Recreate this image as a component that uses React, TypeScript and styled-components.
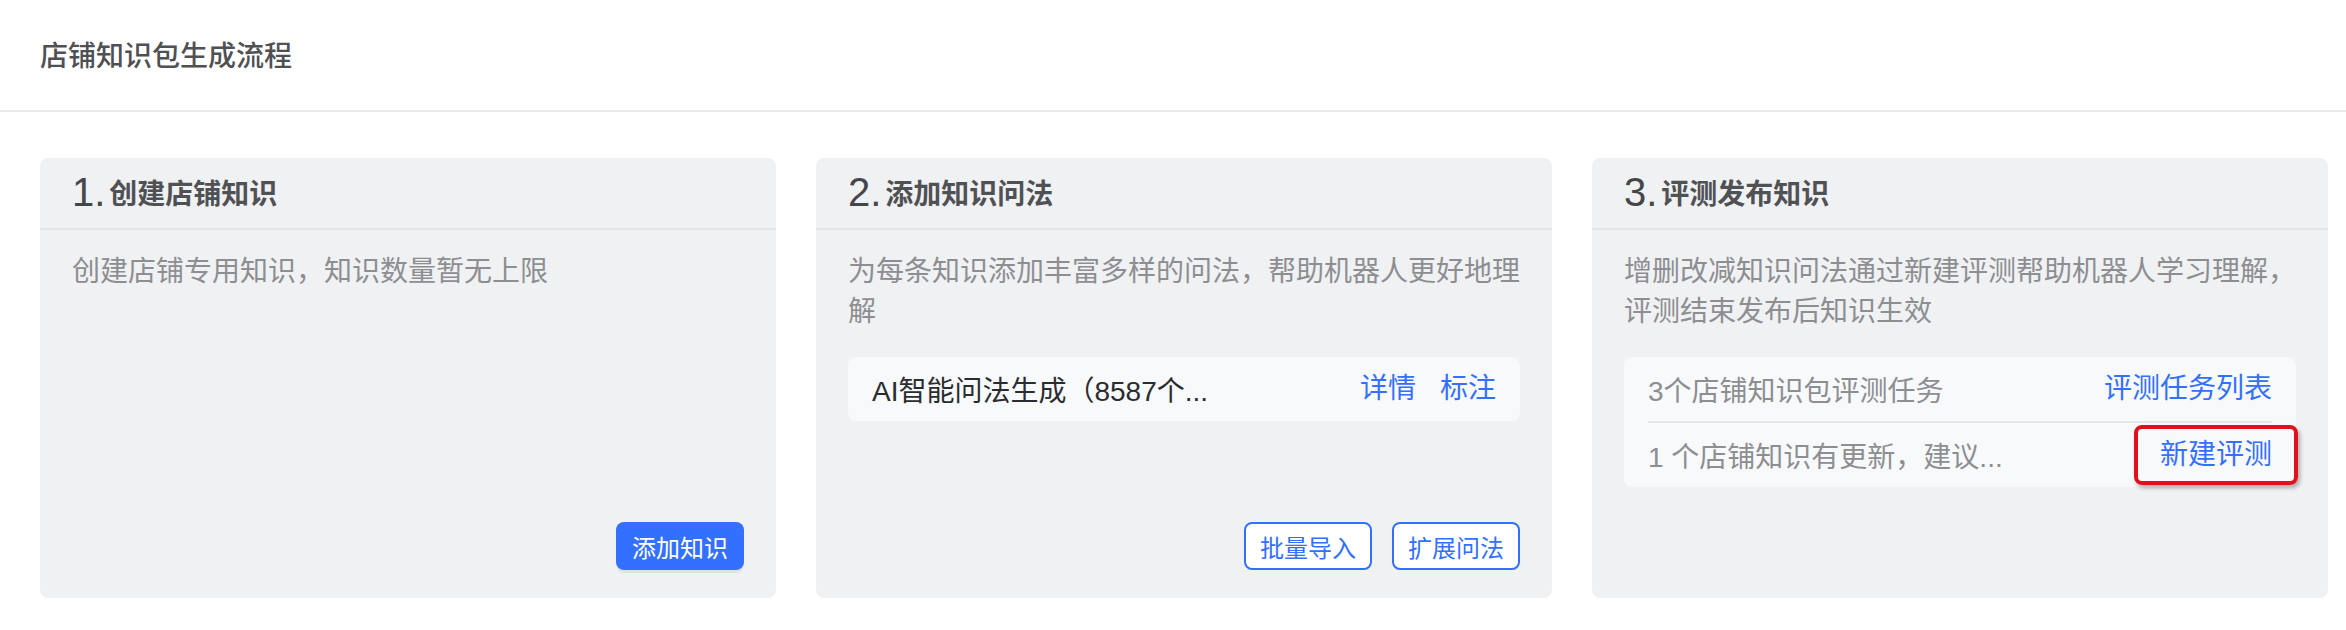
import * as React from 'react'
import styled, { createGlobalStyle, css } from 'styled-components'

const Global = createGlobalStyle`
  * {
    box-sizing: border-box;
  }
  body {
    margin: 0;
    padding: 0;
    background: #fff;
    font-family: "Helvetica Neue", Helvetica, "Liberation Sans", "Noto Sans CJK SC", sans-serif;
  }
`

const blue = '#3370ff'

const Page = styled.div`
  width: 2346px;
  min-height: 630px;
  background: #fff;
`

const Header = styled.div`
  height: 112px;
  display: flex;
  align-items: center;
  padding: 0 40px 2px;
  border-bottom: 2px solid #e8e8e9;
  font-size: 28px;
  font-weight: 500;
  color: #4f5053;
`

const Cards = styled.div`
  display: grid;
  grid-template-columns: repeat(3, 736px);
  gap: 40px;
  padding: 46px 18px 0 40px;
`

const Card = styled.div`
  height: 440px;
  background: #f0f1f3;
  border-radius: 8px;
  display: flex;
  flex-direction: column;
`

const CardHead = styled.div`
  height: 72px;
  display: flex;
  align-items: center;
  padding: 0 32px 2px;
  border-bottom: 2px solid #e3e4e7;
`

const Num = styled.span`
  font-size: 40px;
  color: #45464a;
  margin-right: 4px;
`

const CardTitle = styled.span`
  font-size: 28px;
  font-weight: 700;
  color: #505155;
`

const CardBody = styled.div`
  flex: 1;
  display: flex;
  flex-direction: column;
  padding: 22px 32px 28px;
`

const Desc = styled.div`
  font-size: 28px;
  line-height: 40px;
  color: #8d8e92;
`

const InnerBox = styled.div`
  margin-top: 25px;
  background: #f8f9fb;
  border-radius: 8px;
  padding: 0 24px;
`

const Row = styled.div`
  height: 64px;
  display: flex;
  align-items: center;
  justify-content: space-between;
  & + & {
    height: 66px;
    border-top: 2px solid #e6e7ea;
  }
`

const RowText = styled.span<{ $muted?: boolean }>`
  font-size: 28px;
  color: ${p => (p.$muted ? '#8d8e92' : '#2b2c30')};
  white-space: nowrap;
`

const Links = styled.div`
  display: flex;
  gap: 24px;
  align-items: center;
`

const Link = styled.a`
  font-size: 28px;
  line-height: 40px;
  color: ${blue};
  cursor: pointer;
  white-space: nowrap;
`

const Highlight = styled.span`
  display: inline-flex;
  align-items: center;
  padding: 6px 22px;
  margin-right: -26px;
  border: 4px solid #e3101c;
  border-radius: 8px;
  box-shadow: 2px 3px 4px rgba(0, 0, 0, 0.3);
`

const Footer = styled.div`
  margin-top: auto;
  display: flex;
  justify-content: flex-end;
  gap: 20px;
`

const Button = styled.button<{ $outline?: boolean }>`
  height: 48px;
  border-radius: 8px;
  font-family: inherit;
  font-size: 24px;
  cursor: pointer;
  ${p =>
    p.$outline
      ? css`
          padding: 0 14px;
          background: #fff;
          color: ${blue};
          border: 2px solid ${blue};
        `
      : css`
          padding: 0 16px;
          background: ${blue};
          color: #fff;
          border: none;
          box-shadow: 0 3px 0 rgba(0, 0, 0, 0.06);
        `}
`

export default function App () {
  return (
    <Page>
      <Global />
      <Header>店铺知识包生成流程</Header>
      <Cards>
        <Card>
          <CardHead>
            <Num>1.</Num>
            <CardTitle>创建店铺知识</CardTitle>
          </CardHead>
          <CardBody>
            <Desc>创建店铺专用知识，知识数量暂无上限</Desc>
            <Footer>
              <Button>添加知识</Button>
            </Footer>
          </CardBody>
        </Card>

        <Card>
          <CardHead>
            <Num>2.</Num>
            <CardTitle>添加知识问法</CardTitle>
          </CardHead>
          <CardBody>
            <Desc>为每条知识添加丰富多样的问法，帮助机器人更好地理解</Desc>
            <InnerBox>
              <Row>
                <RowText>AI智能问法生成（8587个...</RowText>
                <Links>
                  <Link>详情</Link>
                  <Link>标注</Link>
                </Links>
              </Row>
            </InnerBox>
            <Footer>
              <Button $outline>批量导入</Button>
              <Button $outline>扩展问法</Button>
            </Footer>
          </CardBody>
        </Card>

        <Card>
          <CardHead>
            <Num>3.</Num>
            <CardTitle>评测发布知识</CardTitle>
          </CardHead>
          <CardBody>
            <Desc>增删改减知识问法通过新建评测帮助机器人学习理解，评测结束发布后知识生效</Desc>
            <InnerBox>
              <Row>
                <RowText $muted>3个店铺知识包评测任务</RowText>
                <Link>评测任务列表</Link>
              </Row>
              <Row>
                <RowText $muted>1 个店铺知识有更新，建议...</RowText>
                <Highlight>
                  <Link>新建评测</Link>
                </Highlight>
              </Row>
            </InnerBox>
          </CardBody>
        </Card>
      </Cards>
    </Page>
  )
}
